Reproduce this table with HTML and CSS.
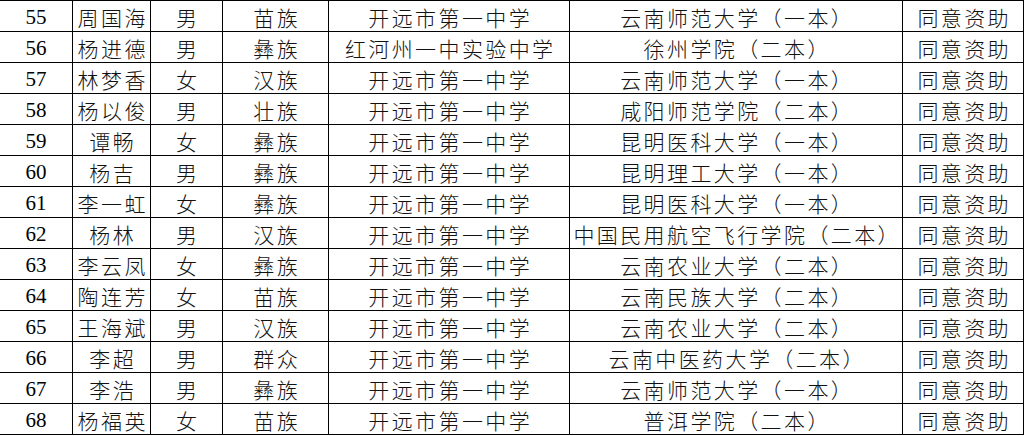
FILE: index.html
```html
<!DOCTYPE html>
<html lang="zh-CN">
<head>
<meta charset="utf-8">
<title>资助名单</title>
<link rel="stylesheet" href="styles.css">
</head>
<body>
<div class="sheet">
  <div class="row"><div class="c num">55</div><div class="c">周国海</div><div class="c">男</div><div class="c">苗族</div><div class="c">开远市第一中学</div><div class="c">云南师范大学（一本）</div><div class="c">同意资助</div></div>
  <div class="row"><div class="c num">56</div><div class="c">杨进德</div><div class="c">男</div><div class="c">彝族</div><div class="c">红河州一中实验中学</div><div class="c">徐州学院（二本）</div><div class="c">同意资助</div></div>
  <div class="row"><div class="c num">57</div><div class="c">林梦香</div><div class="c">女</div><div class="c">汉族</div><div class="c">开远市第一中学</div><div class="c">云南师范大学（一本）</div><div class="c">同意资助</div></div>
  <div class="row"><div class="c num">58</div><div class="c">杨以俊</div><div class="c">男</div><div class="c">壮族</div><div class="c">开远市第一中学</div><div class="c">咸阳师范学院（二本）</div><div class="c">同意资助</div></div>
  <div class="row"><div class="c num">59</div><div class="c">谭畅</div><div class="c">女</div><div class="c">彝族</div><div class="c">开远市第一中学</div><div class="c">昆明医科大学（一本）</div><div class="c">同意资助</div></div>
  <div class="row"><div class="c num">60</div><div class="c">杨吉</div><div class="c">男</div><div class="c">彝族</div><div class="c">开远市第一中学</div><div class="c">昆明理工大学（一本）</div><div class="c">同意资助</div></div>
  <div class="row"><div class="c num">61</div><div class="c">李一虹</div><div class="c">女</div><div class="c">彝族</div><div class="c">开远市第一中学</div><div class="c">昆明医科大学（一本）</div><div class="c">同意资助</div></div>
  <div class="row"><div class="c num">62</div><div class="c">杨林</div><div class="c">男</div><div class="c">汉族</div><div class="c">开远市第一中学</div><div class="c">中国民用航空飞行学院（二本）</div><div class="c">同意资助</div></div>
  <div class="row"><div class="c num">63</div><div class="c">李云凤</div><div class="c">女</div><div class="c">彝族</div><div class="c">开远市第一中学</div><div class="c">云南农业大学（二本）</div><div class="c">同意资助</div></div>
  <div class="row"><div class="c num">64</div><div class="c">陶连芳</div><div class="c">女</div><div class="c">苗族</div><div class="c">开远市第一中学</div><div class="c">云南民族大学（二本）</div><div class="c">同意资助</div></div>
  <div class="row"><div class="c num">65</div><div class="c">王海斌</div><div class="c">男</div><div class="c">汉族</div><div class="c">开远市第一中学</div><div class="c">云南农业大学（二本）</div><div class="c">同意资助</div></div>
  <div class="row"><div class="c num">66</div><div class="c">李超</div><div class="c">男</div><div class="c">群众</div><div class="c">开远市第一中学</div><div class="c">云南中医药大学（二本）</div><div class="c">同意资助</div></div>
  <div class="row"><div class="c num">67</div><div class="c">李浩</div><div class="c">男</div><div class="c">彝族</div><div class="c">开远市第一中学</div><div class="c">云南师范大学（一本）</div><div class="c">同意资助</div></div>
  <div class="row"><div class="c num">68</div><div class="c">杨福英</div><div class="c">女</div><div class="c">苗族</div><div class="c">开远市第一中学</div><div class="c">普洱学院（二本）</div><div class="c">同意资助</div></div>
</div>
</body>
</html>
```
FILE: styles.css
```css
html, body {
  margin: 0;
  padding: 0;
  background: #ffffff;
}
.sheet {
  width: 1024px;
  border-top: 1px solid #000;
  font-family: "Noto Sans CJK SC", "Noto Sans", sans-serif;
  font-weight: 300;
  color: #111;
}
.row {
  display: grid;
  grid-template-columns: 73px 78px 72px 106px 241px 333px 121px;
  height: 31px;
}
.c {
  box-sizing: border-box;
  border-right: 1px solid #000;
  border-bottom: 1px solid #000;
  display: flex;
  align-items: center;
  justify-content: center;
  font-size: 21px;
  letter-spacing: 2.4px;
  text-indent: 2.4px;
  padding-top: 3px;
  white-space: nowrap;
  line-height: 1;
}
.num {
  font-family: "Liberation Serif", "Times New Roman", serif;
  font-weight: 400;
  font-size: 21px;
  letter-spacing: 0;
  text-indent: 0;
  padding-top: 2px;
  color: #000;
}
```
